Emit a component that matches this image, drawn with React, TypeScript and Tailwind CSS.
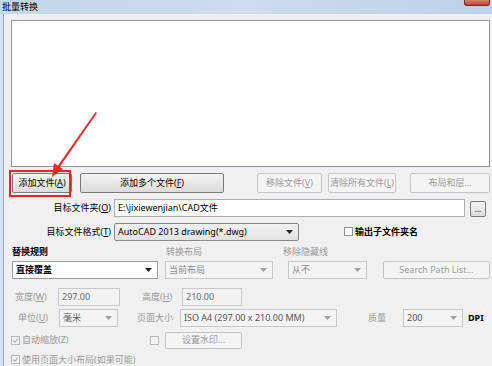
import type { ReactNode } from "react";

const font = { fontFamily: '"Noto Sans", "Noto Sans CJK SC", sans-serif' };

function Btn({ w, disabled, children, h = "h-[20px]" }: { w: string; disabled?: boolean; children: ReactNode; h?: string }) {
  return (
    <div
      className={`${w} ${h} flex shrink-0 items-center justify-center rounded-[2px] border text-[9px] ${
        disabled
          ? "border-[#c2c5c8] bg-[#f4f4f4] text-[#9a9a9a]"
          : "border-[#7a7a7a] bg-gradient-to-b from-[#f4f4f4] to-[#dcdcdc] text-black"
      }`}
    >
      {children}
    </div>
  );
}

function Select({ w, disabled, bold, children }: { w: string; disabled?: boolean; bold?: boolean; children: ReactNode }) {
  return (
    <div
      className={`${w} flex h-[18px] shrink-0 items-center justify-between border pl-[3px] pr-[5px] text-[9px] ${
        disabled ? "border-[#c6c8cc] bg-[#f4f4f4] text-[#8a8a8a]" : "border-[#9a9ca2] bg-white text-black"
      } ${bold ? "font-bold" : ""}`}
    >
      <span className="whitespace-nowrap">{children}</span>
      <svg width="7" height="4" viewBox="0 0 7 4">
        <path d="M0 0h7L3.5 4z" fill={disabled ? "#a0a0a0" : "#222"} />
      </svg>
    </div>
  );
}

function Field({ w, children }: { w: string; children: ReactNode }) {
  return (
    <div className={`${w} flex h-[18px] shrink-0 items-center border border-[#c6c8cc] bg-[#f2f2f2] pl-[3px] text-[9px] text-[#6a6a6a]`}>
      {children}
    </div>
  );
}

function Check({ checked, disabled }: { checked?: boolean; disabled?: boolean }) {
  return (
    <div className={`flex h-[9px] w-[9px] shrink-0 items-center justify-center border ${disabled ? "border-[#b8b8b8] bg-[#f4f4f4]" : "border-[#8f8f8f] bg-white"}`}>
      {checked ? (
        <svg width="7" height="7" viewBox="0 0 7 7">
          <path d="M1 3.5l1.8 1.8L6 1.5" fill="none" stroke="#a8a8a8" strokeWidth="1.1" />
        </svg>
      ) : null}
    </div>
  );
}

export default function App() {
  return (
    <div className="relative h-[366px] w-[492px] overflow-hidden bg-[#f0f0f0]" style={font}>
      {/* title bar */}
      <div className="flex h-[14px] items-center bg-gradient-to-r from-[#c3d6ec] via-[#cddcee] to-[#bcd1ea] pl-[2px] text-[9px] text-black">
        批量转换
      </div>
      <div className="absolute right-[2px] top-0 h-[6px] w-[26px] rounded-b-[3px] border border-t-0 border-[#7a2a22] bg-gradient-to-b from-[#d8806f] to-[#c2402d]" />

      <div className="flex h-[352px]">
        <div className="w-[4px] shrink-0 border-r border-[#9aa6b4] bg-[#d4e2f1]" />
        <div className="flex flex-1 flex-col pl-[7px] pt-[6px] text-[9px]">
          {/* file list */}
          <div className="h-[148px] w-[479px] border border-[#8e959e] bg-white" />

          {/* buttons */}
          <div className="mt-[6px] flex">
            <div className="ml-[1px]">
              <Btn w="w-[60px]">添加文件(<u>A</u>)</Btn>
            </div>
            <div className="ml-[8px]">
              <Btn w="w-[144px]">添加多个文件(<u>F</u>)</Btn>
            </div>
            <div className="ml-[33px]">
              <Btn w="w-[65px]" disabled>
                移除文件(<u>V</u>)
              </Btn>
            </div>
            <div className="ml-[6px]">
              <Btn w="w-[68px]" disabled>
                清除所有文件(<u>L</u>)
              </Btn>
            </div>
            <div className="ml-[14px]">
              <Btn w="w-[80px]" disabled>
                布局和层...
              </Btn>
            </div>
          </div>

          {/* target folder */}
          <div className="mt-[6px] flex items-center">
            <div className="w-[103px] pr-[3px] text-right">
              目标文件夹(<u>O</u>)
            </div>
            <div className="flex h-[18px] w-[351px] items-center border border-[#abadb3] bg-white pl-[3px]">E:\jixiewenjian\CAD文件</div>
            <div className="ml-[5px] mt-[2px] flex h-[16px] w-[16px] items-end justify-center rounded-[2px] border border-[#7a7a7a] bg-gradient-to-b from-[#f4f4f4] to-[#dcdcdc] pb-[3px] text-[8px] leading-none">
              ...
            </div>
          </div>

          {/* target format */}
          <div className="mt-[6px] flex items-center">
            <div className="w-[103px] pr-[3px] text-right">
              目标文件格式(<u>T</u>)
            </div>
            <div className="flex h-[18px] w-[185px] items-center justify-between rounded-[2px] border border-[#8a8a8a] bg-gradient-to-b from-[#f2f2f2] to-[#e2e2e2] pl-[3px] pr-[5px]">
              <span>AutoCAD 2013 drawing(*.dwg)</span>
              <svg width="7" height="4" viewBox="0 0 7 4">
                <path d="M0 0h7L3.5 4z" fill="#222" />
              </svg>
            </div>
            <div className="ml-[45px] flex items-center">
              <Check />
              <span className="ml-[2px] font-bold">输出子文件夹名</span>
            </div>
          </div>

          {/* section labels */}
          <div className="mt-[5px] flex h-[12px] items-center">
            <span className="ml-[1px] w-[154px] font-bold">替换规则</span>
            <span className="w-[117px] text-[#9a9a9a]">转换布局</span>
            <span className="text-[#9a9a9a]">移除隐藏线</span>
          </div>

          {/* selects row */}
          <div className="mt-[3px] flex items-center">
            <div className="ml-[1px]">
              <Select w="w-[146px]" bold>
                直接覆盖
              </Select>
            </div>
            <div className="ml-[7px]">
              <Select w="w-[108px]" disabled>
                当前布局
              </Select>
            </div>
            <div className="ml-[15px]">
              <Select w="w-[79px]" disabled>
                从不
              </Select>
            </div>
            <div className="ml-[16px]">
              <Btn w="w-[107px]" h="h-[18px]" disabled>
                Search Path List...
              </Btn>
            </div>
          </div>

          {/* width / height */}
          <div className="mt-[9px] flex items-center text-[#9a9a9a]">
            <span className="ml-[4px] w-[43px]">
              宽度(<u>W</u>)
            </span>
            <Field w="w-[62px]">297.00</Field>
            <span className="ml-[22px] w-[40px]">
              高度(<u>H</u>)
            </span>
            <Field w="w-[60px]">210.00</Field>
          </div>

          {/* unit / page size / quality */}
          <div className="mt-[3px] flex items-center text-[#9a9a9a]">
            <span className="ml-[7px] w-[41px]">
              单位(<u>U</u>)
            </span>
            <Select w="w-[59px]" disabled>
              <span className="text-[#555]">毫米</span>
            </Select>
            <span className="ml-[19px] w-[43px]">页面大小</span>
            <Select w="w-[157px]" disabled>
              <span className="text-[#555]">ISO A4 (297.00 x 210.00 MM)</span>
            </Select>
            <span className="ml-[31px] w-[35px]">质量</span>
            <Select w="w-[60px]" disabled>
              <span className="text-[#555]">200</span>
            </Select>
            <span className="ml-[5px] font-bold text-black">DPI</span>
          </div>

          {/* auto scale / watermark */}
          <div className="mt-[5px] flex items-center">
            <Check checked disabled />
            <span className="ml-[2px] w-[128px] text-[#9a9a9a]">自动缩放(Z)</span>
            <Check disabled />
            <div className="ml-[6px]">
              <Btn w="w-[77px]" h="h-[17px]" disabled>
                设置水印...
              </Btn>
            </div>
          </div>

          <div className="mt-[4px] flex items-center">
            <Check checked disabled />
            <span className="ml-[2px] text-[#9a9a9a]">使用页面大小布局(如果可能)</span>
          </div>
        </div>
      </div>

      {/* annotation: red box + arrow */}
      <div className="absolute left-[9px] top-[170px] h-[27px] w-[62px] border-2 border-[#e3262a]" />
      <svg className="absolute left-0 top-0" width="492" height="366" viewBox="0 0 492 366">
        <path d="M97 113 L59 168 L57 167 L95.5 112 Z" fill="#e82828" />
        <path d="M52 177 L54 163 L63 169 Z" fill="#e82828" />
      </svg>
    </div>
  );
}
